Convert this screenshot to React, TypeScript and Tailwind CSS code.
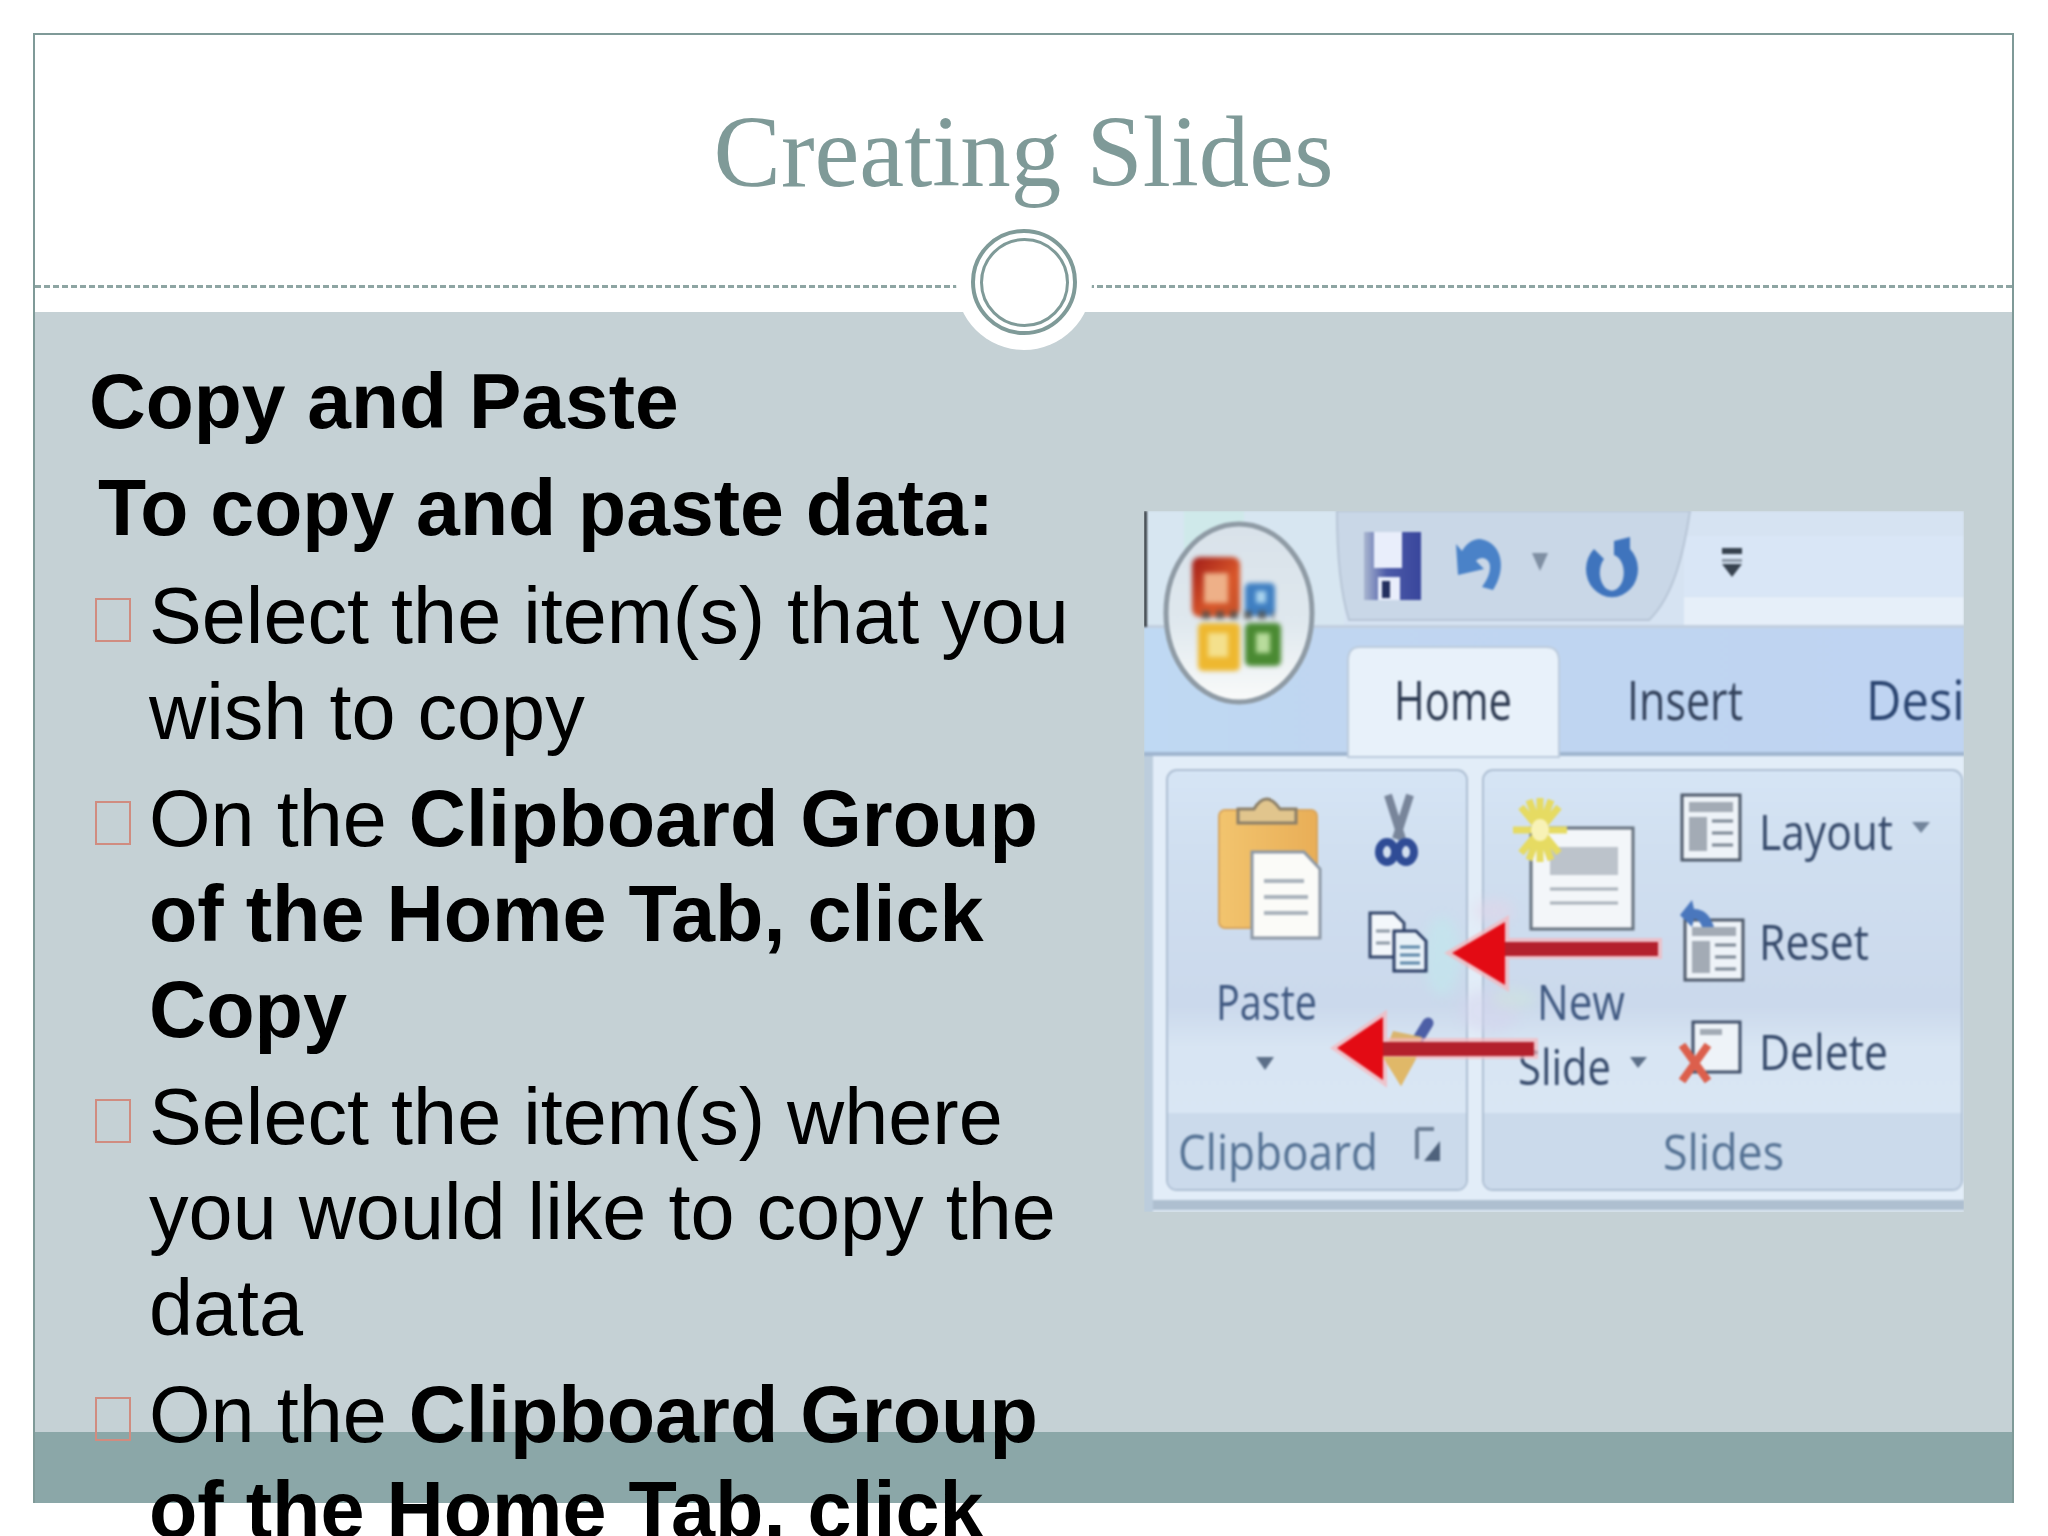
import { ReactNode } from "react";

function Item({ children }: { children: ReactNode }) {
  return (
    <li className="flex">
      <span className="mt-[30px] h-[44px] w-[36px] shrink-0 border-2 border-[#d08c80]" />
      <div className="ml-[18px] w-[960px]">{children}</div>
    </li>
  );
}

function RibbonText({ x, y, w, size = 52, fill = "#35496a", children }: { x: number; y: number; w: number; size?: number; fill?: string; children: string }) {
  return (
    <text x={x} y={y} textLength={w} lengthAdjust="spacingAndGlyphs" fontSize={size} fill={fill} fontFamily="'Open Sans', sans-serif">
      {children}
    </text>
  );
}

function Ribbon() {
  return (
    <div className="h-[701px] w-[820px] overflow-hidden">
      <svg viewBox="0 0 820 701" className="h-[701px] w-[820px] blur-[1.1px]">
        <defs>
          <linearGradient id="tabs" x1="0" y1="0" x2="1" y2="0">
            <stop offset="0" stopColor="#bfd9f3" />
            <stop offset="0.25" stopColor="#c0d6f1" />
            <stop offset="1" stopColor="#bfd4f2" />
          </linearGradient>
          <linearGradient id="group" x1="0" y1="0" x2="0" y2="1">
            <stop offset="0" stopColor="#d6e5f5" />
            <stop offset="0.2" stopColor="#d0dff0" />
            <stop offset="0.56" stopColor="#cbd9ec" />
            <stop offset="0.66" stopColor="#d8e5f3" />
            <stop offset="1" stopColor="#dbe8f5" />
          </linearGradient>
          <linearGradient id="clipboard" x1="0" y1="0" x2="1" y2="0">
            <stop offset="0" stopColor="#f2c46e" />
            <stop offset="1" stopColor="#e9ae57" />
          </linearGradient>
          <linearGradient id="red" x1="0" y1="0" x2="1" y2="1">
            <stop offset="0" stopColor="#a11c18" />
            <stop offset="0.6" stopColor="#d9572a" />
            <stop offset="1" stopColor="#c4512a" />
          </linearGradient>
          <linearGradient id="orb" x1="0" y1="0" x2="0" y2="1">
            <stop offset="0" stopColor="#d9e2ea" />
            <stop offset="0.55" stopColor="#dfe8ee" />
            <stop offset="1" stopColor="#fafbfa" />
          </linearGradient>
          <linearGradient id="disk" x1="0" y1="0" x2="1" y2="0">
            <stop offset="0" stopColor="#a9b6d0" />
            <stop offset="0.4" stopColor="#4c5aa8" />
            <stop offset="1" stopColor="#39469c" />
          </linearGradient>
        </defs>
        {/* title bar */}
        <rect width="820" height="116" fill="#d6e3f2" />
        <rect y="25" x="540" width="280" height="60" fill="#d9e6f6" />
        <rect y="86" x="540" width="280" height="30" fill="#e6eff9" />
        <rect y="0" width="200" height="116" fill="#d7e6f1" />
        <rect x="40" y="0" width="60" height="40" fill="#cfe9ea" />
        <rect y="114" width="820" height="3" fill="#c2cfdf" />
        {/* tab strip */}
        <rect y="117" width="820" height="129" fill="url(#tabs)" />
        <rect y="241" width="820" height="4" fill="#9fb5cf" />
        {/* ribbon body */}
        <rect y="245" width="820" height="456" fill="#e2edf8" />
        <rect y="689" width="820" height="10" fill="#aebfd0" />
        <rect y="245" width="9" height="456" fill="#bccddd" />
        <rect y="0" width="3" height="116" fill="#33393f" />

        {/* quick access */}
        <path d="M193 0 H546 C540 40 530 85 505 109 H205 C196 80 193 40 193 0Z" fill="#c9d7e7" stroke="#b7c5d6" strokeWidth="2" />
        <rect x="220" y="21" width="57" height="68" fill="url(#disk)" />
        <rect x="230" y="21" width="28" height="36" fill="#e9eefb" />
        <rect x="234" y="66" width="22" height="23" fill="#e9eefb" />
        <rect x="238" y="70" width="8" height="17" fill="#24305f" />
        <path d="M349 79 C362 60 360 32 336 28 C328 28 322 33 318 40 L312 33 L314 64 L340 58 L332 50 C338 44 346 48 346 56 C346 64 342 70 338 76Z" fill="#4a82c8" />
        <path d="M388 42 H404 L396 60Z" fill="#7f8fa3" />
        <path d="M450 38 A26 28 0 1 0 486 38 L486 26 L470 30 L470 44 A12 18 0 1 1 460 48Z" fill="#3f74bd" />
        <rect x="578" y="37" width="20" height="6" fill="#37424f" />
        <rect x="578" y="48" width="20" height="3" fill="#8d99a8" />
        <path d="M578 53 H598 L588 66Z" fill="#37424f" />

        {/* office button */}
        <ellipse cx="95" cy="102" rx="73" ry="89" fill="url(#orb)" stroke="#8f9ba5" strokeWidth="5" />
        <g className="blur-[2px]">
          <rect x="48" y="46" width="48" height="60" rx="8" fill="url(#red)" />
          <rect x="60" y="62" width="24" height="30" fill="#eeb088" />
          <rect x="101" y="72" width="30" height="33" rx="5" fill="#3f7fc2" />
          <rect x="112" y="80" width="10" height="12" fill="#a9d4ef" />
          <rect x="54" y="112" width="42" height="48" rx="5" fill="#eeb830" />
          <rect x="64" y="122" width="20" height="24" fill="#f4e08c" />
          <rect x="101" y="112" width="36" height="43" rx="5" fill="#4a8a32" />
          <rect x="112" y="122" width="14" height="20" fill="#b8dc9c" />
          <path d="M58 104 H130" stroke="#4e4e4a" strokeWidth="8" strokeDasharray="8 6" opacity="0.8" />
        </g>

        {/* tabs */}
        <path d="M204 246 V150 Q204 136 216 136 H402 Q415 136 415 150 V246Z" fill="#e8f1fa" stroke="#bccbdc" strokeWidth="2" />
        <RibbonText x={250} y={209} w={118} size={54} fill="#2e3b52">Home</RibbonText>
        <RibbonText x={483} y={209} w={116} size={54} fill="#33425c">Insert</RibbonText>
        <RibbonText x={722} y={209} w={155} size={54} fill="#2a4470">Design</RibbonText>

        {/* groups */}
        <rect x="23" y="259" width="300" height="420" rx="10" fill="url(#group)" stroke="#aebfd3" strokeWidth="2" />
        <rect x="339" y="259" width="479" height="420" rx="10" fill="url(#group)" stroke="#aebfd3" strokeWidth="2" />
        <path d="M24 602 H322 V669 Q322 678 312 678 H34 Q24 678 24 669Z" fill="#cbdaeb" />
        <path d="M340 602 H817 V669 Q817 678 807 678 H350 Q340 678 340 669Z" fill="#cbdaeb" />
        <RibbonText x={34} y={659} w={200} size={50} fill="#557294">Clipboard</RibbonText>
        <RibbonText x={519} y={659} w={121} size={50} fill="#557294">Slides</RibbonText>
        <path d="M273 618 H290 M273 618 V648" stroke="#6d7f96" strokeWidth="4" fill="none" />
        <path d="M296 630 V650 H280Z" fill="#4f627c" />

        {/* colour smears from the low quality source picture */}
        <g className="blur-[6px]">
          <ellipse cx="298" cy="445" rx="18" ry="40" fill="#bfeaec" opacity="0.55" />
          <ellipse cx="345" cy="500" rx="30" ry="22" fill="#d6d4ee" opacity="0.5" />
          <ellipse cx="350" cy="400" rx="20" ry="12" fill="#e6d3e6" opacity="0.45" />
          <ellipse cx="370" cy="488" rx="22" ry="10" fill="#cfead6" opacity="0.4" />
        </g>

        {/* paste */}
        <rect x="75" y="299" width="98" height="118" rx="6" fill="url(#clipboard)" stroke="#d8a65f" strokeWidth="2" />
        <path d="M94 312 V298 H110 Q122 278 136 298 H152 V312Z" fill="#e1c58d" stroke="#8b7f68" strokeWidth="3" />
        <path d="M108 341 H160 L176 358 V427 H108Z" fill="#fbfbf8" stroke="#8d98a5" strokeWidth="3" />
        <path d="M120 370 H160 M120 386 H164 M120 402 H164" stroke="#aab3bc" strokeWidth="4" />
        <RibbonText x={72} y={509} w={101} size={50} fill="#3f5880">Paste</RibbonText>
        <path d="M112 546 H130 L121 559Z" fill="#5c6f88" />

        {/* cut */}
        <path d="M244 284 L258 328 M266 284 L252 328" stroke="#78859a" strokeWidth="8" />
        <ellipse cx="243" cy="341" rx="8" ry="10" fill="#d3e0f0" stroke="#2f4c96" strokeWidth="8" />
        <ellipse cx="262" cy="341" rx="8" ry="10" fill="#d3e0f0" stroke="#2f4c96" strokeWidth="8" />

        {/* copy */}
        <path d="M226 402 H250 L260 412 V446 H226Z" fill="#f3f7fb" stroke="#33466a" strokeWidth="3" />
        <path d="M250 420 H272 L282 430 V460 H250Z" fill="#e8f1f8" stroke="#2c3f66" strokeWidth="3" />
        <path d="M256 436 H276 M256 444 H276 M256 452 H276" stroke="#5c87a8" strokeWidth="3" />
        <path d="M232 420 H246 M232 432 H246" stroke="#8d98a5" strokeWidth="3" />

        {/* format painter */}
        <path d="M284 512 L268 538" stroke="#4d5fa6" strokeWidth="11" strokeLinecap="round" />
        <path d="M249 520 L278 526 L272 548 L257 575 L239 546Z" fill="#d9b56f" />

        {/* new slide */}
        <rect x="387" y="317" width="102" height="101" fill="#f3f6f9" stroke="#66727f" strokeWidth="3" />
        <rect x="406" y="336" width="68" height="28" fill="#bcc3cb" />
        <path d="M406 378 H474 M406 392 H474" stroke="#a9b1ba" strokeWidth="3" />
        <path d="M396 287 V351 M369 319 H423 M377 296 L415 342 M415 296 L377 342 M385 289 L407 349 M407 289 L385 349" stroke="#e6db62" strokeWidth="7" />
        <ellipse cx="396" cy="319" rx="9" ry="11" fill="#f8f2b6" />
        <RibbonText x={393} y={509} w={88} size={50} fill="#3f5880">New</RibbonText>
        <RibbonText x={374} y={574} w={93} size={50}>Slide</RibbonText>
        <path d="M486 546 H503 L494 557Z" fill="#5c6f88" />

        {/* layout */}
        <rect x="538" y="284" width="58" height="65" fill="#eef3f8" stroke="#4e5a6b" strokeWidth="3" />
        <rect x="545" y="291" width="44" height="10" fill="#a3abb5" />
        <rect x="545" y="306" width="18" height="34" fill="#a3abb5" />
        <path d="M568 310 H589 M568 322 H589 M568 334 H589" stroke="#7c8794" strokeWidth="3" />
        <RibbonText x={615} y={339} w={134} size={50}>Layout</RibbonText>
        <path d="M768 311 H786 L777 322Z" fill="#73859c" />

        {/* reset */}
        <rect x="541" y="409" width="58" height="60" fill="#eef3f8" stroke="#4e5a6b" strokeWidth="3" />
        <rect x="548" y="416" width="44" height="9" fill="#a3abb5" />
        <rect x="548" y="430" width="18" height="32" fill="#a3abb5" />
        <path d="M571 434 H592 M571 446 H592 M571 458 H592" stroke="#7c8794" strokeWidth="3" />
        <path d="M536 404 L548 389 L550 398 C560 398 566 404 570 416 L558 416 C556 410 553 408 550 408 L548 416Z" fill="#4a77bd" />
        <RibbonText x={615} y={449} w={110} size={50}>Reset</RibbonText>

        {/* delete */}
        <rect x="549" y="511" width="47" height="50" fill="#eef3f8" stroke="#41506a" strokeWidth="3" />
        <rect x="556" y="518" width="22" height="6" fill="#a3abb5" />
        <path d="M538 534 L564 570 M564 534 L538 570" stroke="#dc5f4c" strokeWidth="8" />
        <RibbonText x={615} y={559} w={129} size={50}>Delete</RibbonText>

        {/* red arrows */}
        <path d="M308 442 L361 411 V474Z M361 431 H514 V444 H361Z" fill="#f8b6bb" stroke="#f8b6bb" strokeWidth="8" opacity="0.7" />
        <rect x="359" y="431" width="155" height="14" fill="#b3202c" />
        <path d="M308 442 L361 411 V474Z" fill="#e30b14" />
        <path d="M193 537 L239 506 V569Z M239 531 H390 V544 H239Z" fill="#f8b6bb" stroke="#f8b6bb" strokeWidth="8" opacity="0.7" />
        <path d="M239 546 L272 546 L257 575Z" fill="#e0b868" />
        <rect x="237" y="531" width="153" height="14" fill="#b3202c" />
        <path d="M193 537 L239 506 V569Z" fill="#e30b14" />
      </svg>
    </div>
  );
}

export default function App() {
  return (
    <div className="h-[1536px] w-[2048px] overflow-hidden bg-white pl-[33px] pt-[33px] font-['Liberation_Sans',Arial,sans-serif] text-black">
      <div className="relative flex h-[1470px] w-[1981px] flex-col border-2 border-b-0 border-[#7f9a98]">
        <header className="relative flex h-[277px] shrink-0 flex-col">
          <h1 className="mt-[67px] text-center font-['Liberation_Serif',serif] text-[101px] leading-[100px] text-[#7f9a98]">Creating Slides</h1>
          <div className="mt-[83px] border-t-[3px] border-dashed border-[#8ea5a3]" />
        </header>
        <div className="absolute left-[921px] top-[179px] z-20 flex h-[136px] w-[136px] items-center justify-center rounded-full bg-white">
          <div className="flex h-[106px] w-[106px] items-center justify-center rounded-full border-[4px] border-[#7f9a98]">
            <div className="h-[89px] w-[89px] rounded-full border-[3px] border-[#7f9a98]" />
          </div>
        </div>
        <main className="relative z-10 flex min-h-0 flex-1 bg-[#c5d1d5]">
          <div className="w-[1110px] shrink-0 pt-[42px] text-[79.2px] leading-[95.5px]">
            <h2 className="ml-[54px] text-[78.6px] font-bold">Copy and Paste</h2>
            <h3 className="ml-[63px] mt-[11.5px] text-[78.8px] font-bold">To copy and paste data:</h3>
            <ul className="ml-[60px] mt-[11.5px] flex flex-col gap-[11.5px]">
              <Item>Select the item(s) that you wish to copy</Item>
              <Item>
                On the <b>Clipboard Group of the Home Tab, click Copy</b>
              </Item>
              <Item>Select the item(s) where you would like to copy the data</Item>
              <Item>
                On the <b>Clipboard Group of the Home Tab, click Paste</b>
              </Item>
            </ul>
          </div>
          <div className="ml-[-1px] mt-[199px]">
            <Ribbon />
          </div>
        </main>
        <footer className="h-[71px] shrink-0 bg-[#8ba7a8]" />
      </div>
    </div>
  );
}
